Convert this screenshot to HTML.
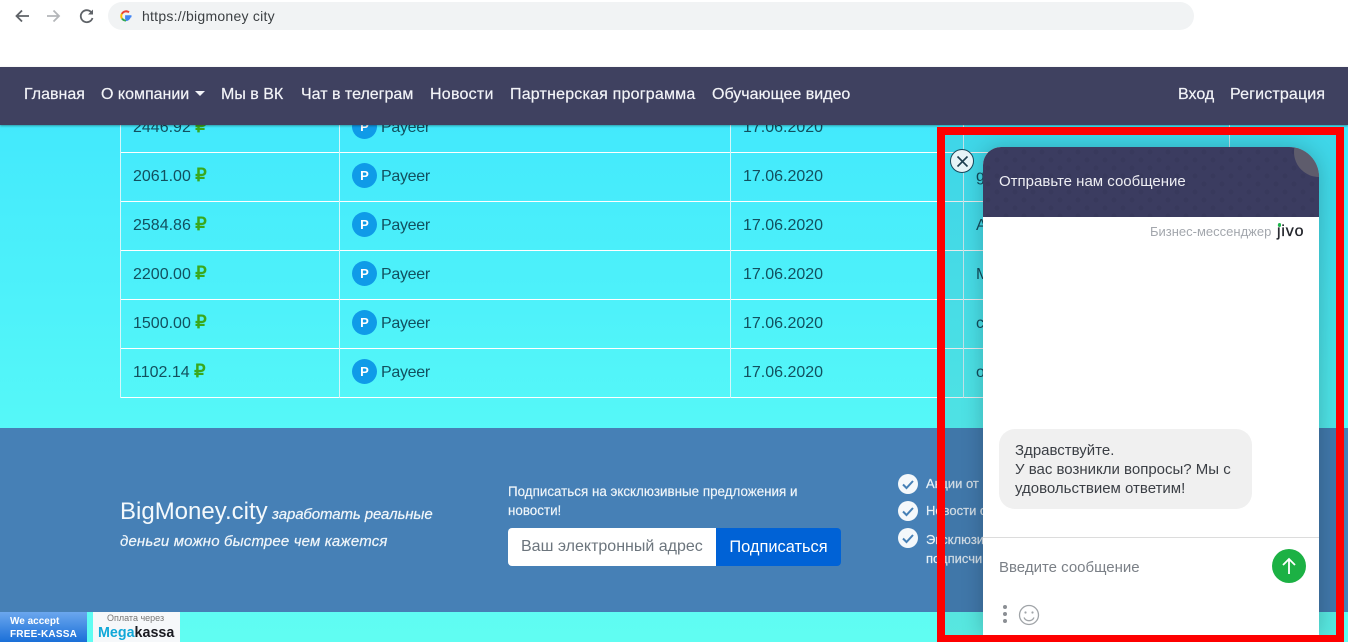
<!DOCTYPE html>
<html lang="ru"><head><meta charset="utf-8"><title>BigMoney</title>
<style>
html,body{margin:0;padding:0}
body{width:1348px;height:642px;position:relative;overflow:hidden;background:#fff;font-family:"Liberation Sans",sans-serif}
.a{position:absolute;white-space:nowrap}
.bg{left:0;top:125px;width:1348px;height:517px;background:linear-gradient(#43e9fc,#56f8f8 60%,#60fdf2)}
.h{background:#fff}
.v{background:#d3f7fb}
.cell{font-size:16px;color:#12505f;line-height:20px}
.pay{letter-spacing:-.3px}
.rub{color:#3aa81c;font-weight:bold;font-size:18px;line-height:20px}
.pc{width:25px;height:25px;border-radius:50%;background:#0f9be8;color:#fff;font-weight:bold;font-size:13px;line-height:25px;text-align:center}
.nav{font-size:16px;color:#f2f3f7;line-height:20px;-webkit-text-stroke:.2px #f2f3f7}
.ck{width:20px;height:20px;border-radius:50%;background:#f4f8fb}
.li{font-size:13px;color:#e6f0f7;-webkit-text-stroke:.2px #e6f0f7}
</style></head><body>
<!-- browser bar -->
<div class="a" style="left:108px;top:2px;width:1086px;height:28px;border-radius:14px;background:#f1f3f4"></div>
<svg class="a" style="left:12px;top:6px" width="90" height="20" viewBox="0 0 90 20">
<path d="M17 10H5M10 4.500L4.500 10L10 15.500" fill="none" stroke="#5f6368" stroke-width="1.800"/>
<path d="M35 10H47M41.500 4.500L47 10L41.500 15.500" fill="none" stroke="#b4b6b9" stroke-width="1.800"/>
<path d="M79.500 6.500A6 6 0 1 0 80.500 12" fill="none" stroke="#5f6368" stroke-width="1.800"/><path d="M81 3.500V8.500H76Z" fill="#5f6368"/>
</svg>
<svg class="a" style="left:119px;top:9px" width="14" height="14" viewBox="0 0 14 14">
<path d="M12.500 7.200H7.100V9.200H10.200A3.500 3.500 0 0 1 7 11" fill="none" stroke="#4285f4" stroke-width="2"/>
<path d="M7 11.500A4.500 4.500 0 0 1 3 9.500" fill="none" stroke="#34a853" stroke-width="2"/>
<path d="M2.900 9.500A4.800 4.800 0 0 1 2.900 4.800" fill="none" stroke="#fbbc05" stroke-width="2"/>
<path d="M2.900 4.800A4.800 4.800 0 0 1 10 3.300" fill="none" stroke="#ea4335" stroke-width="2"/>
</svg>
<div class="a" style="left:142px;top:8px;font-size:14px;line-height:16px;color:#3c4043;letter-spacing:.25px">https://bigmoney city</div>

<div class="a bg"></div>

<!-- table -->
<div class="a h" style="left:120px;top:152px;width:1110px;height:1px"></div>
<div class="a h" style="left:120px;top:201px;width:1110px;height:1px"></div>
<div class="a h" style="left:120px;top:250px;width:1110px;height:1px"></div>
<div class="a h" style="left:120px;top:299px;width:1110px;height:1px"></div>
<div class="a h" style="left:120px;top:348px;width:1110px;height:1px"></div>
<div class="a h" style="left:120px;top:397px;width:1110px;height:1px"></div>
<div class="a v" style="left:120px;top:125px;width:1px;height:273px"></div>
<div class="a v" style="left:339px;top:125px;width:1px;height:273px"></div>
<div class="a v" style="left:730px;top:125px;width:1px;height:273px"></div>
<div class="a v" style="left:963px;top:125px;width:1px;height:273px"></div>
<div class="a v" style="left:1229px;top:125px;width:1px;height:273px"></div>

<div class="a cell" style="left:133px;top:116px">2446.92 <span class="rub">₽</span></div>
<div class="a pc" style="left:352px;top:114px">P</div><div class="a cell pay" style="left:381px;top:118px">Payeer</div><div class="a cell" style="left:743px;top:118px">17.06.2020</div>
<div class="a cell" style="left:133px;top:165px">2061.00 <span class="rub">₽</span></div>
<div class="a pc" style="left:352px;top:163px">P</div><div class="a cell pay" style="left:381px;top:167px">Payeer</div><div class="a cell" style="left:743px;top:167px">17.06.2020</div>
<div class="a cell" style="left:133px;top:214px">2584.86 <span class="rub">₽</span></div>
<div class="a pc" style="left:352px;top:212px">P</div><div class="a cell pay" style="left:381px;top:216px">Payeer</div><div class="a cell" style="left:743px;top:216px">17.06.2020</div>
<div class="a cell" style="left:133px;top:263px">2200.00 <span class="rub">₽</span></div>
<div class="a pc" style="left:352px;top:261px">P</div><div class="a cell pay" style="left:381px;top:265px">Payeer</div><div class="a cell" style="left:743px;top:265px">17.06.2020</div>
<div class="a cell" style="left:133px;top:312px">1500.00 <span class="rub">₽</span></div>
<div class="a pc" style="left:352px;top:310px">P</div><div class="a cell pay" style="left:381px;top:314px">Payeer</div><div class="a cell" style="left:743px;top:314px">17.06.2020</div>
<div class="a cell" style="left:133px;top:361px">1102.14 <span class="rub">₽</span></div>
<div class="a pc" style="left:352px;top:359px">P</div><div class="a cell pay" style="left:381px;top:363px">Payeer</div><div class="a cell" style="left:743px;top:363px">17.06.2020</div>

<div class="a cell" style="left:976px;top:167px">g</div>
<div class="a cell" style="left:976px;top:216px">A</div>
<div class="a cell" style="left:976px;top:265px">M</div>
<div class="a cell" style="left:976px;top:314px">c</div>
<div class="a cell" style="left:976px;top:363px">o</div>

<!-- nav -->
<div class="a" style="left:0;top:67px;width:1348px;height:58px;background:#3f4160;box-shadow:0 1px 2px rgba(0,0,0,.35)"></div>
<div class="a nav" style="left:24px;top:85px">Главная</div>
<div class="a nav" style="left:101px;top:85px">О компании</div>
<div class="a" style="left:195px;top:91px;width:0;height:0;border-left:5px solid transparent;border-right:5px solid transparent;border-top:5px solid #f2f3f7"></div>
<div class="a nav" style="left:221px;top:85px">Мы в ВК</div>
<div class="a nav" style="left:301px;top:85px">Чат в телеграм</div>
<div class="a nav" style="left:430px;top:85px;letter-spacing:.25px">Новости</div>
<div class="a nav" style="left:510px;top:85px;letter-spacing:.2px">Партнерская программа</div>
<div class="a nav" style="left:712px;top:85px">Обучающее видео</div>
<div class="a nav" style="left:1178px;top:85px">Вход</div>
<div class="a nav" style="left:1230px;top:85px;letter-spacing:.15px">Регистрация</div>

<!-- footer -->
<div class="a" style="left:0;top:428px;width:1348px;height:184px;background:#4680b6"></div>
<div class="a" style="left:120px;top:498px;font-size:24px;line-height:28px;color:#f4f9fc">BigMoney.city</div>
<div class="a" style="left:272px;top:505px;font-size:15px;line-height:20px;font-style:italic;color:#f0f6fa;letter-spacing:-.1px;-webkit-text-stroke:.2px #f0f6fa">заработать реальные</div>
<div class="a" style="left:120px;top:532px;font-size:15px;line-height:20px;font-style:italic;color:#f0f6fa;letter-spacing:.15px;-webkit-text-stroke:.2px #f0f6fa">деньги можно быстрее чем кажется</div>
<div class="a" style="left:508px;top:482px;font-size:13.400px;line-height:19px;color:#f0f6fa;-webkit-text-stroke:.15px #f0f6fa">Подписаться на эксклюзивные предложения и<br>новости!</div>
<div class="a" style="left:508px;top:528px;width:208px;height:38px;background:#fff;border-radius:4px 0 0 4px;overflow:hidden"><div style="padding-left:13px;font-size:16px;line-height:38px;color:#6c757d;width:182px;overflow:hidden">Ваш электронный адрес</div></div>
<div class="a" style="left:716px;top:528px;width:125px;height:38px;background:#0062d6;border-radius:0 4px 4px 0;color:#fff;font-size:16.400px;line-height:38px;text-align:center">Подписаться</div>

<div class="a ck" style="left:898px;top:474px"></div>
<div class="a ck" style="left:898px;top:501px"></div>
<div class="a ck" style="left:898px;top:528px"></div>
<svg class="a" style="left:898px;top:474px" width="20" height="74" viewBox="0 0 20 74" fill="none" stroke="#4680b6" stroke-width="2">
<path d="M5 10.500L8.500 14L15 7"/><path d="M5 37.500L8.500 41L15 34"/><path d="M5 64.500L8.500 68L15 61"/></svg>
<div class="a li" style="left:926px;top:476px;line-height:16px">Акции от</div>
<div class="a li" style="left:926px;top:503px;line-height:16px">Новости о</div>
<div class="a li" style="left:926px;top:530px;line-height:19px">Эксклюзив<br>подписчи</div>

<!-- badges -->
<div class="a" style="left:0;top:612px;width:87px;height:30px;background:linear-gradient(#6ba7ee,#1a6fd8);color:#fff;font-weight:bold;font-size:10px;line-height:13px;padding:3px 0 0 10px;box-sizing:border-box">We accept<br><span style="letter-spacing:.2px">FREE-KASSA</span></div>
<div class="a" style="left:93px;top:612px;width:87px;height:30px;background:#f6f8fa"></div>
<div class="a" style="left:107px;top:613px;font-size:9px;line-height:11px;color:#777">Оплата через</div>
<div class="a" style="left:98px;top:624px;font-size:14.300px;line-height:18px;font-weight:bold;color:#1b1b22"><span style="color:#11a8d8">Mega</span>kassa</div>

<!-- darkening behind chat -->
<div class="a" style="left:945px;top:135px;width:392px;height:501px;background:rgba(20,40,60,.1)"></div>

<!-- chat -->
<div class="a" style="left:983px;top:147px;width:336px;height:488px;background:#fff;border-radius:18px 30px 0 0;box-shadow:0 0 22px rgba(0,0,0,.22);overflow:hidden">
  <div class="a" style="left:0;top:0;width:336px;height:70px;background:#3b3c60"></div>
  <svg class="a" style="left:0;top:0" width="336" height="70"><defs><pattern id="d" width="18" height="16" patternUnits="userSpaceOnUse"><circle cx="5" cy="5" r="2.500" fill="#323354"/><circle cx="14" cy="13" r="2.500" fill="#323354"/></pattern></defs><rect width="336" height="70" fill="url(#d)" opacity=".35"/><circle cx="336" cy="5" r="25" fill="#5e5c6c"/></svg>
  <div class="a" style="left:16px;top:26px;font-size:15px;line-height:18px;color:#eeeef3">Отправьте нам сообщение</div>
  <div class="a" style="left:167px;top:77px;font-size:13px;line-height:16px;color:#a3a7ad">Бизнес-мессенджер</div>
  <div class="a" style="left:294px;top:76px;font-size:16px;line-height:18px;color:#23252b;letter-spacing:.85px;-webkit-text-stroke:.3px #23252b">jivo</div>
  <div class="a" style="left:295px;top:76px;width:3px;height:4px;background:#1fb84d;border-radius:2px"></div>
  <div class="a" style="left:16px;top:282px;width:253px;height:80px;border-radius:16px;background:#f0f0f0"></div>
  <div class="a" style="left:32px;top:294px;font-size:15px;line-height:19px;color:#3b3f45">Здравствуйте.<br>У вас возникли вопросы? Мы с<br>удовольствием ответим!</div>
  <div class="a" style="left:0;top:390px;width:336px;height:1px;background:#dcdcdc"></div>
  <div class="a" style="left:16px;top:412px;font-size:15px;line-height:18px;color:#7b8087">Введите сообщение</div>
  <div class="a" style="left:289px;top:402px;width:34px;height:34px;border-radius:50%;background:#1cb144"></div>
  <svg class="a" style="left:289px;top:402px" width="34" height="34" fill="none" stroke="#fff" stroke-width="1.800"><path d="M17 25V10M11 16L17 10L23 16"/></svg>
  <svg class="a" style="left:16px;top:456px" width="44" height="24" fill="none"><circle cx="6" cy="4" r="2" fill="#8b8f94"/><circle cx="6" cy="11" r="2" fill="#8b8f94"/><circle cx="6" cy="18" r="2" fill="#8b8f94"/><circle cx="30" cy="12" r="9.500" stroke="#a0a4a8" stroke-width="1.300"/><circle cx="26.500" cy="9.500" r="1.100" fill="#a0a4a8"/><circle cx="33.500" cy="9.500" r="1.100" fill="#a0a4a8"/><path d="M25 14.500A5.500 5.500 0 0 0 35 14.500" stroke="#a0a4a8" stroke-width="1.300"/></svg>
</div>
<div class="a" style="left:950px;top:149px;width:22px;height:22px;border:1.500px solid #17475a;border-radius:50%;background:#e6f3f6"></div>
<svg class="a" style="left:950px;top:149px" width="25" height="25" fill="none" stroke="#1f3f4f" stroke-width="1.600"><path d="M7.500 7.500L17.500 17.500M17.500 7.500L7.500 17.500"/></svg>

<!-- red box -->
<div class="a" style="left:937px;top:127px;width:407px;height:515px;border:8px solid #fe0000;border-bottom-width:7px;box-sizing:border-box"></div>
</body></html>
